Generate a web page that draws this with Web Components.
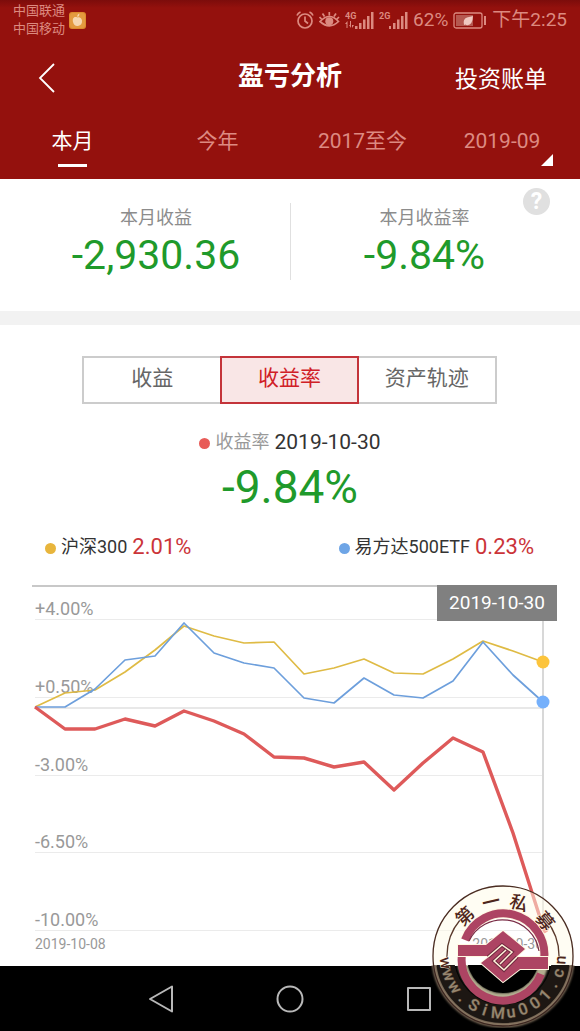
<!DOCTYPE html>
<html lang="zh-CN">
<head>
<meta charset="utf-8">
<meta name="viewport" content="width=device-width, initial-scale=1">
<title>盈亏分析</title>
<style>
  html, body { margin: 0; background: #fff; }
  body { font-family: Roboto, "Noto Sans CJK SC", sans-serif; color: #333; }
</style>
</head>
<body>
<profit-page></profit-page>

<script>
const define = (name, html, setup) => {
  const template = document.createElement('template');
  template.innerHTML = '<style>*{box-sizing:border-box}button{font:inherit;color:inherit;background:none;border:0;padding:0;margin:0;cursor:pointer}svg{display:block}</style>' + html;
  customElements.define(name, class extends HTMLElement {
    constructor() {
      super();
      this.attachShadow({ mode: 'open' }).append(template.content.cloneNode(true));
    }
    connectedCallback() { if (setup) setup(this.shadowRoot, this); }
  });
};

define('status-bar', `
<style>
  :host { display: flex; justify-content: space-between; align-items: center; height: 40px; padding: 0 13px; color: #dc8a80; }
  .left, .right { display: flex; align-items: center; }
  .left { gap: 4px; }
  .carriers { font-size: 13px; line-height: 18px; }
  .right { gap: 5px; line-height: 24px; font-size: 19px; }
</style>
<div class="left">
  <div class="carriers"><div>中国联通</div><div>中国移动</div></div>
  <svg width="17" height="17" viewBox="0 0 17 17"><rect width="17" height="17" rx="3" fill="#dd8a2c"/><rect x="1" y="1" width="15" height="15" rx="3" fill="#e39a3f"/><path d="M8.300 5.500C4.500 4 3.300 7 4 10c.7 3 2.700 4.500 5 4 3-.5 4.300-2.500 4-5.500-.3-2.500-2.500-4-4.700-3zM8.500 5c-.5-1.500 0-2.800 1.800-3.500.2 1.800-.3 2.900-1.800 3.500z" fill="#f6d7b0"/></svg>
</div>
<div class="right">
  <svg width="18" height="20" viewBox="0 0 18 20" fill="none" stroke="currentColor" stroke-width="1.700"><circle cx="9" cy="11" r="7"/><path d="M9 6.500V11l3 2.500M1 5.500Q2 3 4.500 2M17 5.500Q16 3 13.500 2"/></svg>
  <svg width="21" height="20" viewBox="0 0 21 20" fill="none" stroke="currentColor" stroke-width="1.700"><path d="M1 11.500q9.500-10 18.500 0q-9 8.500-18.500 0zM10.300 5.500V2M5.500 6.500L3.500 3.500M15 6.500l2-3M2.500 9L.5 7M18 9l2-2"/><circle cx="10.300" cy="11.300" r="4" fill="currentColor" stroke="none"/></svg>
  <svg width="29" height="20" viewBox="0 0 29 20" fill="currentColor"><text x="0" y="9" font-family="Roboto" font-size="9" font-weight="700">4G</text><path d="M1.500 18v-4H0l2.500-3v7zM5 11v4h-1l2 3v-7zM7 11v4h2l-2 3zM10 16h2.500v3h-2.500zM14 13h2.500v6h-2.500zM18 9.500h2.500V19h-2.500zM22 6h2.500v13h-2.500zM26 2h2.500v17h-2.500z"/></svg>
  <svg width="29" height="20" viewBox="0 0 29 20" fill="currentColor"><text x="0" y="9" font-family="Roboto" font-size="9" font-weight="700">2G</text><path d="M10 16h2v3h-2zM14 13h2.500v6H14zM18 9.500h2.500V19H18zM22 6h2.500v13H22zM26 2h2.500v17H26z"/></svg>
  <span>62%</span>
  <svg width="34" height="17" viewBox="0 0 34 17"><rect x="1" y="1" width="28" height="15" rx="2" fill="none" stroke="currentColor" stroke-width="1.300"/><rect x="3" y="3" width="17" height="11" fill="#b55850"/><path d="M11 13q-1.500-6 3-7.500 3-1 6-1.500-.5 9-5.500 9.200-1.500 0-2-.7z" fill="#f0c8c0"/><rect x="31" y="4" width="2" height="9" fill="currentColor"/></svg>
  <span>下午2:25</span>
</div>`);

define('title-bar', `
<style>
  :host { display: grid; grid-template-columns: 1fr auto 1fr; height: 72px; padding: 0 33px; align-items: center; color: #fff; }
  button { width: 28px; height: 44px; padding-top: 4px; margin-left: 3px; }
  h1 { margin: 0; font-size: 26px; line-height: 36px; font-weight: 700; }
  a { justify-self: end; color: inherit; text-decoration: none; font-size: 23px; line-height: 32px; padding-top: 8px; }
</style>
<button type="button" aria-label="返回"><svg width="20" height="32" viewBox="0 0 20 32" fill="none" stroke="#fff" stroke-width="1.800"><path d="M18 2L4 16l14 14"/></svg></button>
<h1><slot></slot></h1>
<a href="#bill">投资账单</a>`);

define('period-tabs', `
<style>
  :host { display: grid; grid-template-columns: repeat(4, 1fr); height: 67px; color: #dd8a82; font-size: 21px; }
  button { display: flex; flex-direction: column; align-items: center; padding-top: 13px; line-height: 32px; position: relative; }
  .on { color: #fff; }
  .on::after { content: ""; width: 29px; height: 3px; margin-top: 7px; background: #fff; }
  .month { padding-right: 11px; }
  .month svg { position: absolute; right: 27px; bottom: 13px; }
</style>
<button type="button" class="on" aria-pressed="true">本月</button>
<button type="button">今年</button>
<button type="button">2017至今</button>
<button type="button" class="month">2019-09<svg width="12" height="12" viewBox="0 0 12 12"><path d="M12 0v12H0z" fill="#fff"/></svg></button>`);

define('stat-card', `
<style>
  :host { display: flex; flex-direction: column; align-items: center; }
  .label { font-size: 18px; line-height: 26px; padding-top: 2px; color: #8c8c8c; }
  .value { font-size: 41px; line-height: 48px; color: #1f9a2b; }
</style>
<span class="label"><slot name="label"></slot></span>
<span class="value"><slot></slot></span>`);

define('summary-panel', `
<style>
  :host { display: grid; grid-template-columns: 1fr 1fr; height: 132px; padding: 24px 22px 31px; position: relative; background: #fff; }
  stat-card { border-left: 1px solid #e0e0e0; }
  stat-card:first-of-type { border: 0; }
  button { position: absolute; right: 30px; top: 9px; width: 27px; height: 27px; border-radius: 50%; background: #e0e0e0; color: #fff; font-size: 23px; font-weight: 700; line-height: 27px; }
</style>
<stat-card><span slot="label">本月收益</span>-2,930.36</stat-card>
<stat-card><span slot="label">本月收益率</span>-9.84%</stat-card>
<button type="button">?</button>`);

define('segment-control', `
<style>
  :host { display: grid; grid-template-columns: repeat(3, 1fr); height: 47px; font-size: 21px; color: #666; }
  button { border: 2px solid #ccc; line-height: 40px; padding-bottom: 4px; }
  button:first-of-type { border-right: 0; }
  button:last-of-type { border-left: 0; }
  button.on { color: #d02027; border-color: #c4343a; background: #f9e6e6; }
</style>
<button type="button">收益</button>
<button type="button" class="on" aria-pressed="true">收益率</button>
<button type="button">资产轨迹</button>`);

define('legend-item', `
<style>
  :host { display: flex; align-items: center; gap: 5px; font-size: 18px; line-height: 28px; color: #333; white-space: nowrap; }
  i { width: 11px; height: 11px; border-radius: 50%; background: var(--dot); margin-top: 2px; }
  .value { font-size: var(--value-size, 22px); color: var(--value, #cb3439); }
</style>
<i></i><span><slot></slot></span><span class="value"><slot name="value"></slot></span>`);

define('return-chart', `
<style>
  :host { display: block; padding: 0 23px 0 32px; }
  .frame { border-top: 2px solid #c8c8c8; padding: 0 14px 0 3px; position: relative; }
  .plot { position: relative; display: grid; grid-template-rows: 33px repeat(4, 1fr); height: 344px; color: #999; font-size: 18px; line-height: 20px; }
  .plot > span { display: flex; align-items: flex-end; border-bottom: 1px solid #ebebeb; }
  .plot > svg { position: absolute; inset: 0; width: 100%; height: 100%; overflow: visible; fill: none; }
  path { vector-effect: non-scaling-stroke; stroke-linejoin: round; }
  .tip { position: absolute; right: 0; top: -2px; width: 120px; height: 36px; background: #808080; color: #fff; font-size: 19px; line-height: 36px; text-align: center; }
  .axis { display: flex; justify-content: space-between; font-size: 14px; line-height: 26px; color: #999; }
</style>
<div class="frame">
  <div class="plot">
    <span>+4.00%</span><span>+0.50%</span><span>-3.00%</span><span>-6.50%</span><span>-10.00%</span>
    <svg viewBox="0 1 508 344" preserveAspectRatio="none" aria-hidden="true">
      <path d="M0 122H508" stroke="#e8e8e8" stroke-width="2"/>
      <path d="M508 1V345" stroke="#d8d8d8" stroke-width="2"/>
      <g id="series"></g>
    </svg>
  </div>
  <div class="axis"><span>2019-10-08</span><span>2019-10-30</span></div>
  <div class="tip">2019-10-30</div>
</div>`, root => {
  const series = [
    { color: '#dfbb45', dot: '#fcc43c', width: 1.7, ys: [121, 107, 104, 86, 64, 40, 50, 57, 56, 88, 82, 73, 87, 88, 73, 55, 65, 76] },
    { color: '#6d9fdc', dot: '#75b0fb', width: 1.7, ys: [121, 121, 103, 74, 70, 37, 67, 77, 82, 112, 117, 92, 109, 112, 95, 56, 89, 116] },
    { color: '#de5a5a', dot: '#f36b62', width: 3.4, ys: [121, 143, 143, 133, 140, 125, 135, 148, 171, 172, 181, 176, 204, 177, 152, 166, 247, 341] }
  ];
  root.getElementById('series').innerHTML = series.map(s => {
    const d = s.ys.map((y, i) => (i ? 'L' : 'M') + Math.round(i * 508 / 17) + ' ' + y).join('');
    return '<path d="' + d + '" stroke="' + s.color + '" stroke-width="' + s.width + '"/>' +
      '<path d="M508 ' + s.ys[17] + 'h.01" stroke="' + s.dot + '" stroke-width="13" stroke-linecap="round"/>';
  }).join('');
});

define('trend-panel', `
<style>
  :host { display: block; border-top: 14px solid #f2f2f2; }
  segment-control { margin: 31px 83px 0 82px; }
  .current { display: flex; flex-direction: column; align-items: center; padding-top: 25px; }
  .grey { color: #999; }
  .big { font-size: 46px; line-height: 56px; color: #1f9a2b; margin-top: 3px; }
  .rivals { display: flex; justify-content: space-between; padding: 18px 46px 24px 45px; }
</style>
<segment-control></segment-control>
<div class="current">
  <legend-item style="--dot:#e85c58;--value:#333;--value-size:21px"><span class="grey">收益率</span><span slot="value">2019-10-30</span></legend-item>
  <span class="big">-9.84%</span>
</div>
<div class="rivals">
  <legend-item style="--dot:#e8b53c">沪深300<span slot="value">2.01%</span></legend-item>
  <legend-item style="--dot:#6ea5e6">易方达500ETF<span slot="value">0.23%</span></legend-item>
</div>
<return-chart></return-chart>`);

define('system-nav', `
<style>
  :host { display: flex; justify-content: center; gap: 85px; align-items: center; height: 65px; background: #000; }
  button { width: 44px; height: 44px; display: grid; place-items: center; }
  svg { fill: none; stroke: #b8b8b8; stroke-width: 2; stroke-linejoin: round; }
</style>
<button type="button" aria-label="返回"><svg width="28" height="28" viewBox="0 0 28 28"><path d="M25 1.500v25L3 14z"/></svg></button>
<button type="button" aria-label="主页"><svg width="28" height="28" viewBox="0 0 28 28"><circle cx="14" cy="14" r="12.500"/></svg></button>
<button type="button" aria-label="最近任务"><svg width="28" height="28" viewBox="0 0 28 28"><path d="M3 3h22v22H3z"/></svg></button>`);

define('site-seal', `
<style>
  :host { display: block; position: absolute; right: 5px; bottom: 3px; width: 144px; height: 144px; pointer-events: none; }
  text { text-anchor: middle; dominant-baseline: central; font-weight: 500; }
</style>
<svg width="144" height="144" viewBox="-72 -72 144 144">
  <defs>
    <clipPath id="up"><path d="M-72-72H72V9H-72z"/></clipPath>
    <clipPath id="down"><path d="M-72 9H72V72H-72z"/></clipPath>
    <filter id="glow" x="-20%" y="-20%" width="140%" height="140%"><feGaussianBlur stdDeviation="1.200"/></filter>
  </defs>
  <g clip-path="url(#up)" fill="none">
    <circle r="58" stroke="#fffbe8" stroke-opacity=".5" stroke-width="25"/>
    <circle r="70" stroke="#4a2c22" stroke-width="1.300"/>
    <path d="M-56 1A56 56 0 0 1-43-36M56 1A56 56 0 0 0 43-36" stroke="#5a3a2c" stroke-width="1.300"/>
  </g>
  <g clip-path="url(#down)" fill="none">
    <circle r="69" stroke="#8b7863" stroke-width="5" filter="url(#glow)"/>
    <circle r="58" stroke="#1d1713" stroke-width="18"/>
    <circle r="70" stroke="#3b2620" stroke-width="1.300"/>
    <circle r="41" cy="1" stroke="#b3ae90" stroke-width="10" filter="url(#glow)"/>
    <circle r="36" cy="1" fill="#000"/>
  </g>
  <g fill="none">
    <g stroke="#fff8e2" stroke-width="10" clip-path="url(#up)">
      <path d="M-38-16A41 41 0 0 1 41 4V13"/>
    </g>
    <g stroke="#ad4463" stroke-width="8">
      <path d="M-38-16A41 41 0 0 1 41 4V13"/>
      <path d="M38 18A41 41 0 0 1-41-2V-10"/>
    </g>
    <path d="M-34-15A37 37 0 0 1 36-5" stroke="#7a2c46" stroke-width="1.200"/>
  </g>
  <path d="M-45-11H-17L0-25 22-7 13 1H45V13H17L0 26-22 7-13 0H-45z" fill="#fff8e2" stroke="#fff8e2" stroke-width="2"/>
  <path d="M-45-11H-17L0-25 22-7 13 1H45V13H17L0 26-22 7-13 0H-45z" fill="#ad4463"/>
  <path d="M-15 1L-1-11 9-4-3 8M14 1L1 14-9 5 3-6" fill="none" stroke="#702a41" stroke-width="3.500"/>
  <path d="M-15 1L-1-11 9-4-3 8M14 1L1 14-9 5 3-6" fill="none" stroke="#fff4da" stroke-width="1.500"/>
  <g id="glyphs"></g>
</svg>`, root => {
  const top = [['第', -43], ['一', -13], ['私', 17], ['募', 50]];
  const bottom = [...'www.SiMu001.cn'];
  const glyph = (ch, angle, radius, flip, size, fill, glow) => {
    const a = angle * Math.PI / 180;
    const at = 'translate(' + Math.round(Math.sin(a) * radius) + ' ' + Math.round(-Math.cos(a) * radius) + ') rotate(' + (angle + flip) + ')';
    return '<text transform="' + at + '" font-size="' + size + '" fill="' + fill + '" stroke="' + glow + '" stroke-width="1" paint-order="stroke">' + ch + '</text>';
  };
  root.getElementById('glyphs').innerHTML =
    top.map(([ch, a]) => glyph(ch, a, 55, 0, 18, '#4d251c', '#fff8e2')).join('') +
    bottom.map((ch, i) => {
      const a = 263 - i * 13;
      const edge = i < 1 || i > 12;
      return glyph(ch, a, 57, -180, 16, edge ? '#4d251c' : '#95866f', edge ? '#fff8e2' : '#4a392e');
    }).join('');
});

define('profit-page', `
<style>
  :host { display: flex; flex-direction: column; min-height: 100vh; position: relative; }
  header { background: linear-gradient(#7c0c0b, #94110d 8px); }
  main { flex: 1; }
</style>
<header>
  <status-bar></status-bar>
  <title-bar>盈亏分析</title-bar>
  <period-tabs></period-tabs>
</header>
<main>
  <summary-panel></summary-panel>
  <trend-panel></trend-panel>
</main>
<system-nav></system-nav>
<site-seal></site-seal>`);
</script>
</body>
</html>
